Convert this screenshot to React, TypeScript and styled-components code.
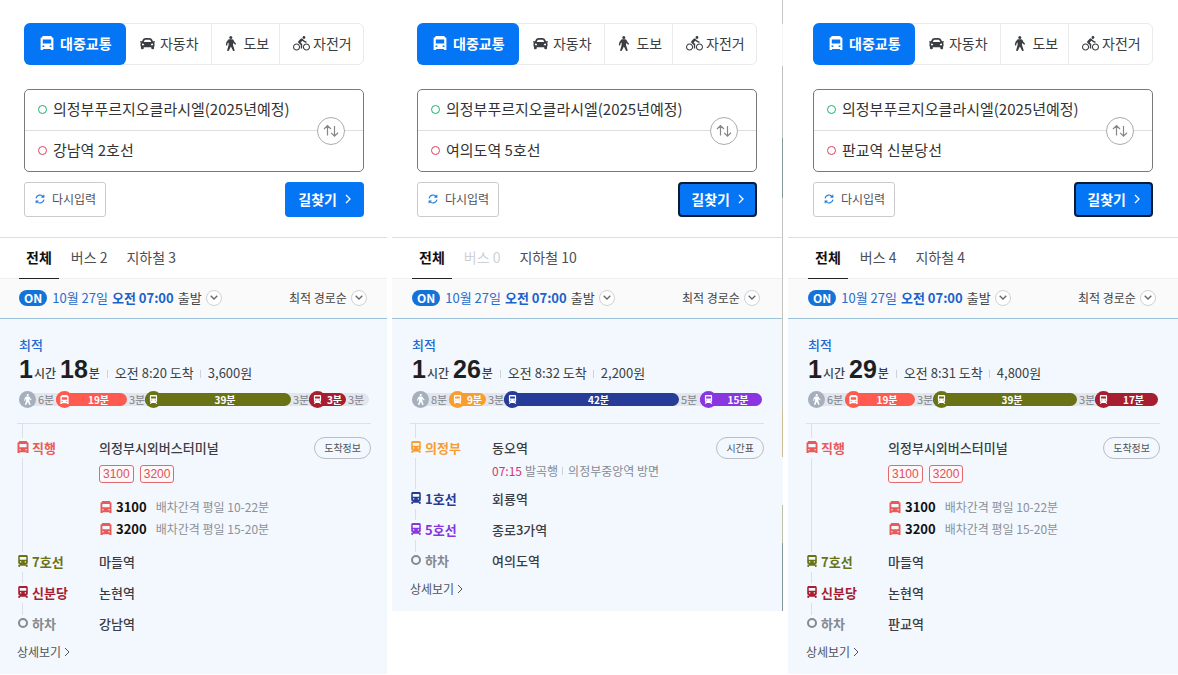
import React from "react";
import styled, { createGlobalStyle, css } from "styled-components";
import { FaCar } from "react-icons/fa";
import { MdDirectionsBike } from "react-icons/md";

const GlobalStyle = createGlobalStyle`
  *, *::before, *::after { box-sizing: border-box; }
  body {
    margin: 0;
    background: #fff;
    color: #333;
    font-family: "Noto Sans CJK KR", "Noto Sans", sans-serif;
    font-size: 14px;
    line-height: 20px;
  }
  button, input, select { font: inherit; color: inherit; }
  button { padding: 0; border: 0; background: none; cursor: pointer; white-space: nowrap; }
  ul, ol { margin: 0; padding: 0; list-style: none; }
  svg { display: block; flex: none; }
`;

/* ---------- data ---------- */

type Vehicle = "walk" | "bus" | "train" | "gap";

interface Segment {
  kind: Vehicle;
  color?: string;
  label: string;
  size: number;
}

interface Stop {
  kind: "bus" | "train" | "end";
  color: string;
  line: string;
  station: string;
  action?: string;
  buses?: { no: string; interval: string }[];
  next?: { time: string; bound: string; via: string };
}

interface Route {
  id: string;
  to: string;
  focused?: boolean;
  busCount: number;
  subwayCount: number;
  minutes: string;
  arrive: string;
  fare: string;
  segments: Segment[];
  stops: Stop[];
}

const RED = "#ff5a50";
const OLIVE = "#697215";
const CRIMSON = "#a71e31";
const NAVY = "#263c96";
const PURPLE = "#8936e0";
const ORANGE = "#f99d2e";
const BUS = "#e95b58";

const expressStop: Stop = {
  kind: "bus",
  color: BUS,
  line: "직행",
  station: "의정부시외버스터미널",
  action: "도착정보",
  buses: [
    { no: "3100", interval: "배차간격 평일 10-22분" },
    { no: "3200", interval: "배차간격 평일 15-20분" },
  ],
};

const routes: Route[] = [
  {
    id: "gangnam",
    to: "강남역 2호선",
    busCount: 2,
    subwayCount: 3,
    minutes: "18",
    arrive: "오전 8:20 도착",
    fare: "3,600원",
    segments: [
      { kind: "walk", label: "6분", size: 37 },
      { kind: "bus", color: RED, label: "19분", size: 71 },
      { kind: "gap", label: "3분", size: 18 },
      { kind: "train", color: OLIVE, label: "39분", size: 146 },
      { kind: "gap", label: "3분", size: 18 },
      { kind: "train", color: CRIMSON, label: "3분", size: 37 },
      { kind: "gap", label: "3분", size: 23 },
    ],
    stops: [
      expressStop,
      { kind: "train", color: OLIVE, line: "7호선", station: "마들역" },
      { kind: "train", color: CRIMSON, line: "신분당", station: "논현역" },
      { kind: "end", color: "#858a90", line: "하차", station: "강남역" },
    ],
  },
  {
    id: "yeouido",
    to: "여의도역 5호선",
    focused: true,
    busCount: 0,
    subwayCount: 10,
    minutes: "26",
    arrive: "오전 8:32 도착",
    fare: "2,200원",
    segments: [
      { kind: "walk", label: "8분", size: 37 },
      { kind: "train", color: ORANGE, label: "9분", size: 37 },
      { kind: "gap", label: "3분", size: 18 },
      { kind: "train", color: NAVY, label: "42분", size: 175 },
      { kind: "gap", label: "5분", size: 21 },
      { kind: "train", color: PURPLE, label: "15분", size: 62 },
    ],
    stops: [
      {
        kind: "train",
        color: ORANGE,
        line: "의정부",
        station: "동오역",
        action: "시간표",
        next: { time: "07:15", bound: "발곡행", via: "의정부중앙역 방면" },
      },
      { kind: "train", color: NAVY, line: "1호선", station: "회룡역" },
      { kind: "train", color: PURPLE, line: "5호선", station: "종로3가역" },
      { kind: "end", color: "#858a90", line: "하차", station: "여의도역" },
    ],
  },
  {
    id: "pangyo",
    to: "판교역 신분당선",
    focused: true,
    busCount: 4,
    subwayCount: 4,
    minutes: "29",
    arrive: "오전 8:31 도착",
    fare: "4,800원",
    segments: [
      { kind: "walk", label: "6분", size: 37 },
      { kind: "bus", color: RED, label: "19분", size: 70 },
      { kind: "gap", label: "3분", size: 18 },
      { kind: "train", color: OLIVE, label: "39분", size: 144 },
      { kind: "gap", label: "3분", size: 18 },
      { kind: "train", color: CRIMSON, label: "17분", size: 63 },
    ],
    stops: [
      expressStop,
      { kind: "train", color: OLIVE, line: "7호선", station: "마들역" },
      { kind: "train", color: CRIMSON, line: "신분당", station: "논현역" },
      { kind: "end", color: "#858a90", line: "하차", station: "판교역" },
    ],
  },
];

/* ---------- icons ---------- */

const BusIcon = ({ size = 12 }: { size?: number }) => (
  <svg width={size} height={size} viewBox="0 0 14 14" fill="currentColor" aria-hidden="true">
    <path
      fillRule="evenodd"
      d="M3.400 0h7.200c.8 0 1.300.6 1.400 1.500h.4c.6 0 1 .4 1 1V14H10.900v-1H3.100v1H.6V2.500c0-.6.4-1 1-1H2C2.100.6 2.600 0 3.400 0ZM2.800 3.400v4h8.400v-4H2.800ZM2.500 9.600v1.300h1.800V9.600H2.500Zm7.200 0v1.300h1.800V9.600H9.700Z"
    />
  </svg>
);

const TrainIcon = ({ size = 12 }: { size?: number }) => (
  <svg width={size} height={size} viewBox="0 0 14 14" fill="currentColor" aria-hidden="true">
    <path
      fillRule="evenodd"
      d="M3.400 0h7.200C11.800 0 12.600.8 12.600 2v6.800c0 1.100-.8 1.900-1.900 1.900l.5.8h1.400v1H11.800l.8 1.500h-1.700l-.8-1.500H3.900L3.100 14H1.400l.8-1.500h-.8v-1h1.400l.5-.8c-1.100 0-1.900-.8-1.900-1.900V2c0-1.200.8-2 2-2ZM3.200 2.200v3.400h7.600V2.200H3.200Zm.3 5.100v1.400H5V7.300H3.500Zm5.500 0v1.400h1.500V7.300H9Z"
    />
  </svg>
);

const WalkIcon = ({ size = 15 }: { size?: number }) => (
  <svg width={size} height={size} viewBox="0 0 15 15" fill="currentColor" aria-hidden="true">
    <circle cx="7.800" cy="1.500" r="1.500" />
    <path d="M5.900 3.300h3.300c.6 0 1 .3 1.300.8l1 2 1.400 1.300c.6.700-.4 1.600-1 1.100L10.300 7.200l-.3-.4v2.300l1.600 5c.3 1-1.300 1.500-1.700.5L7.900 10.400l-2 4.200c-.5.900-2 .4-1.700-.6l1.400-4.900V6.400l-1 .9-.3 1.700c-.2.900-1.500.7-1.400-.2l.4-2.300.2-.4 1.500-2.200c.2-.4.500-.6.900-.6Z" />
  </svg>
);

const SwapIcon = () => (
  <svg width="16" height="14" viewBox="0 0 16 14" fill="none" stroke="#85878a" strokeWidth="1.200" aria-hidden="true">
    <path d="M4.500 11.500V1.500M1 5l3.500-3.500L8 5M11.500 2v10M8.200 8.800l3.300 3.300L15 8.800" />
  </svg>
);

const RefreshIcon = () => (
  <svg width="10" height="10" viewBox="0 0 12 12" fill="none" stroke="#1a7be0" strokeWidth="1.300" aria-hidden="true">
    <path d="M1.200 5.200A4.900 4.900 0 0 1 10 3.300M10.600.8v2.900H7.700M10.800 6.800A4.900 4.900 0 0 1 2 8.700M1.400 11.200V8.300h2.900" />
  </svg>
);

const ArrowRight = ({ width = 1 }: { width?: number }) => (
  <svg width="6" height="10" viewBox="0 0 6 10" fill="none" stroke="currentColor" strokeWidth={width} aria-hidden="true">
    <path d="M1 1l4 4-4 4" />
  </svg>
);

const ArrowDown = () => (
  <svg width="8" height="5" viewBox="0 0 8 5" fill="none" stroke="#666" strokeWidth="1.300" aria-hidden="true">
    <path d="M.7.700L4 4 7.300.700" />
  </svg>
);

/* ---------- page ---------- */

const Page = styled.main`
  display: grid;
  grid-template-columns: 387fr 391fr 390fr;
  gap: 5px;
  align-items: start;
`;

/* The first panel is trimmed a little closer than the two beside it. */
const Panel = styled.section<{ $trimmed: boolean; $edge: boolean }>`
  --left: ${(p) => (p.$trimmed ? 0 : 1)}px;
  --right: ${(p) => (p.$trimmed ? 0 : 2)}px;
  min-width: 0;
  display: grid;
  grid-template-columns: minmax(0, 1fr) ${(p) => (p.$edge ? "1px" : "")};
`;

const MapEdge = styled.div`
  background: linear-gradient(
    #c6c6c6 0 24px, #f4f4f4 24px 66px, #bfc1c1 66px 138px, #87999a 138px 198px,
    #c3c3bf 198px 410px, #c9bd98 410px 457px, #f3f8fc 457px 505px,
    #bcc0ac 505px 543px, #83999d 543px
  );
`;

const SearchForm = styled.form`
  padding: 23px calc(23px + var(--right)) 20px calc(24px + var(--left));
`;

const Modes = styled.div`
  display: flex;
  height: 42px;
  border: 1px solid #e8eaed;
  border-radius: 6px;
`;

const Mode = styled.button<{ $active?: boolean; $grow: number; $gap: number }>`
  flex: ${(p) => p.$grow} 1 0;
  display: flex;
  align-items: center;
  justify-content: center;
  gap: ${(p) => p.$gap}px;
  padding: 0 0 2px 2px;
  color: #3a3d42;

  & + & + & { border-left: 1px solid #e8eaed; }

  ${(p) =>
    p.$active &&
    css`
      margin: -1px 0 -1px -1px;
      border-radius: 6px;
      background: #0475f4;
      color: #fff;
      font-weight: 700;
    `}
`;

const Places = styled.div`
  position: relative;
  margin-top: 24px;
  border: 1px solid #77797d;
  border-radius: 5px;
`;

const Place = styled.label`
  display: flex;
  align-items: center;
  gap: 6px;
  height: 40px;
  padding: 0 56px 2px 13px;

  & + & {
    height: 41px;
    border-top: 1px solid #dcdee0;
  }
`;

const Dot = styled.span<{ $color: string }>`
  flex: none;
  width: 9px;
  height: 9px;
  border: 1px solid ${(p) => p.$color};
  border-radius: 50%;
`;

const PlaceInput = styled.input`
  flex: 1;
  min-width: 0;
  padding: 0;
  border: 0;
  outline: 0;
  background: none;
  font-size: 15px;
  line-height: 24px;
  color: #333;
`;

const SwapButton = styled.button`
  position: absolute;
  top: 50%;
  right: 18px;
  display: grid;
  place-items: center;
  width: 28px;
  height: 28px;
  margin-top: -14px;
  border: 1px solid #a9abae;
  border-radius: 50%;
  background: #fff;
`;

const Actions = styled.div`
  display: flex;
  justify-content: space-between;
  margin-top: 10px;
`;

const ResetButton = styled.button`
  display: flex;
  align-items: center;
  gap: 7px;
  height: 35px;
  padding: 0 9px 2px 10px;
  border: 1px solid #c9cbce;
  border-radius: 3px;
  font-size: 12px;
  color: #505357;
`;

const FindButton = styled.button<{ $focused?: boolean }>`
  display: flex;
  align-items: center;
  gap: 8px;
  height: 35px;
  padding: 0 11px 1px;
  border: 2px solid ${(p) => (p.$focused ? "#0a1a33" : "#0475f4")};
  border-radius: 4px;
  background: #0475f4;
  color: #fff;
  font-weight: 700;
`;

const Tabs = styled.div`
  display: flex;
  gap: 5px;
  padding: 0 calc(19px + var(--left));
  border-top: 1px solid #dcdddf;
  border-bottom: 1px solid #eeeeee;
`;

const Tab = styled.button<{ $active?: boolean }>`
  height: 41px;
  margin-bottom: -1px;
  padding: 0 7px 2px;
  border-bottom: 1px solid transparent;
  color: #4c4f54;

  &:disabled { color: #cfd1d4; cursor: default; }

  ${(p) =>
    p.$active &&
    css`
      border-color: #222;
      color: #111;
      font-weight: 700;
    `}
`;

const FilterBar = styled.div`
  display: flex;
  align-items: center;
  height: 40px;
  padding: 0 calc(20px + var(--right)) 2px calc(19px + var(--left));
  border-bottom: 1px solid #9cc1da;
  background: #fafafa;
`;

const OnSwitch = styled.button`
  height: 16px;
  padding: 0 5px;
  border-radius: 8px;
  background: #1473d8;
  color: #fff;
  font-size: 12px;
  font-weight: 700;
  line-height: 16px;
`;

const Departure = styled.button`
  display: flex;
  align-items: center;
  gap: 4px;
  margin-left: 5px;
  font-size: 13px;
  color: #444;

  time { display: flex; gap: 4px; color: #2a6ccb; }
  b { color: #1b62cc; }
`;

const Round = styled.span`
  display: grid;
  place-items: center;
  width: 16px;
  height: 16px;
  border: 1px solid #cfd1d4;
  border-radius: 50%;
  background: #fff;
`;

const SortField = styled.label`
  display: flex;
  align-items: center;
  gap: 4px;
  margin-left: auto;

  select {
    appearance: none;
    padding: 0;
    border: 0;
    background: none;
    font-size: 12px;
    line-height: 20px;
    color: #444;
  }
`;

const Card = styled.article`
  padding: 16px calc(16px + var(--right)) 12px calc(17px + var(--left));
  background: #f3f8fe;
`;

const Best = styled.div`
  padding-left: 2px;
  color: #1f69cf;
  font-size: 13px;
  font-weight: 500;
`;

const Bar = styled.i`
  flex: none;
  display: inline-block;
  width: 1px;
  height: 8px;
  margin: 0 7px 0 6px;
  background: #cdd2d9;
`;

const Summary = styled.div`
  display: flex;
  align-items: baseline;
  height: 28px;
  padding-left: 2px;
  font-size: 13px;
  line-height: 28px;
  color: #3c3f44;
  white-space: nowrap;

  strong {
    font-family: "Liberation Sans", Arial, sans-serif;
    font-size: 25px;
    line-height: 28px;
    color: #1d1f22;
  }
`;

const Unit = styled.span`
  margin: 0 1px;
  font-size: 12px;
  font-weight: 500;

  & + strong { margin-left: 3px; }
`;

const Track = styled.ol`
  display: flex;
  height: 13px;
  margin: 10px 2px 0;
  border-radius: 7px;
  background: #e3e7ed;
`;

const Leg = styled.li<{ $size: number; $color?: string }>`
  flex: ${(p) => p.$size} 1 0;
  min-width: 0;
  display: flex;
  align-items: center;
  border-radius: 7px;
  background: ${(p) => p.$color ?? "transparent"};
  color: ${(p) => (p.$color ? "#fff" : "#7d838c")};
  font-size: ${(p) => (p.$color ? 10 : 11)}px;
  font-weight: ${(p) => (p.$color ? 700 : 400)};
  line-height: 13px;
  white-space: nowrap;

  > span:last-child {
    flex: 1;
    padding: ${(p) => (p.$color ? "0 3px 0 0" : "0 0 0 2px")};
    text-align: ${(p) => (p.$color ? "center" : "left")};
  }
`;

const LegIcon = styled.span<{ $color: string }>`
  flex: none;
  display: grid;
  place-items: center;
  width: 17px;
  height: 17px;
  border-radius: 50%;
  background: ${(p) => p.$color};
  color: #fff;
`;

const Stops = styled.ol`
  position: relative;
  display: flex;
  flex-direction: column;
  gap: 11px;
  margin-top: 17px;
  padding-top: 14px;
  border-top: 1px solid #d9e1ec;

  &::before {
    content: "";
    position: absolute;
    top: 0;
    bottom: 16px;
    left: 5px;
    width: 1px;
    background: #d9e0e9;
  }
`;

const StopRow = styled.li`
  display: grid;
  grid-template-columns: 82px minmax(0, 1fr) auto;
  align-items: start;
`;

const LineName = styled.div<{ $color: string }>`
  display: flex;
  align-items: center;
  color: ${(p) => p.$color};
  font-size: 13px;
  font-weight: 700;
`;

const LineIcon = styled.span`
  position: relative;
  display: grid;
  justify-content: center;
  width: 12px;
  margin-right: 3px;
  padding: 3px 0 5px;
  background: #f3f8fe;
`;

const EndMark = styled.i`
  width: 10px;
  height: 10px;
  border: 2px solid #858a90;
  border-radius: 50%;
`;

const Station = styled.div`
  font-size: 13px;
  font-weight: 500;
  color: #3a3d42;
`;

const PillButton = styled.button`
  height: 22px;
  margin: -1px 0;
  padding: 0 9px;
  border: 1px solid #b9bdc3;
  border-radius: 11px;
  font-size: 10px;
  color: #505357;
`;

const BusTags = styled.div`
  display: flex;
  gap: 6px;
  margin-top: 7px;
`;

const BusTag = styled.span`
  height: 18px;
  padding: 0 3px;
  border: 1px solid #e06a70;
  border-radius: 3px;
  background: #fff7f8;
  color: #d9535a;
  font: 12px/16px "Liberation Sans", Arial, sans-serif;
`;

const BusTimes = styled.ul`
  margin: 13px 0 1px;
  padding-left: 1px;

  li {
    display: flex;
    align-items: center;
    height: 22px;
    font-size: 12px;
    color: #8b9097;
    white-space: nowrap;
  }
  svg { color: ${BUS}; }
  b { margin: 0 9px 0 4px; font-size: 13px; color: #111; }
`;

const NextTrain = styled.p`
  display: flex;
  align-items: center;
  margin: 6px 0 0;
  font-size: 12px;
  line-height: 14px;
  color: #858a92;
  white-space: nowrap;

  time { margin-right: 3px; color: #d6336c; }
  ${Bar} { margin: 0 5px 0 4px; }
`;

const Detail = styled.a`
  display: flex;
  align-items: center;
  gap: 3px;
  width: max-content;
  margin-top: 8px;
  color: #505357;
  font-size: 12px;
  text-decoration: none;
`;

/* ---------- parts ---------- */

const Legs = ({ segments }: { segments: Segment[] }) => (
  <Track>
    {segments.map((s, i) => (
      <Leg key={i} $size={s.size} $color={s.color}>
        {s.kind === "walk" && (
          <LegIcon $color="#a5afbd">
            <WalkIcon size={11} />
          </LegIcon>
        )}
        {s.kind === "bus" && (
          <LegIcon $color={s.color!}>
            <BusIcon size={9} />
          </LegIcon>
        )}
        {s.kind === "train" && (
          <LegIcon $color={s.color!}>
            <TrainIcon size={9} />
          </LegIcon>
        )}
        <span>{s.label}</span>
      </Leg>
    ))}
  </Track>
);

const StopItem = ({ stop }: { stop: Stop }) => (
  <StopRow>
    <LineName $color={stop.color}>
      <LineIcon>
        {stop.kind === "bus" && <BusIcon />}
        {stop.kind === "train" && <TrainIcon />}
        {stop.kind === "end" && <EndMark />}
      </LineIcon>
      {stop.line}
    </LineName>
    <div>
      <Station>{stop.station}</Station>
      {stop.buses && (
        <>
          <BusTags>
            {stop.buses.map((b) => (
              <BusTag key={b.no}>{b.no}</BusTag>
            ))}
          </BusTags>
          <BusTimes>
            {stop.buses.map((b) => (
              <li key={b.no}>
                <BusIcon />
                <b>{b.no}</b>
                {b.interval}
              </li>
            ))}
          </BusTimes>
        </>
      )}
      {stop.next && (
        <NextTrain>
          <time>{stop.next.time}</time>
          {stop.next.bound}
          <Bar />
          {stop.next.via}
        </NextTrain>
      )}
    </div>
    {stop.action && <PillButton type="button">{stop.action}</PillButton>}
  </StopRow>
);

const RoutePanel = ({ route, index }: { route: Route; index: number }) => (
  <Panel $trimmed={index === 0} $edge={index === 1}>
    <div>
      <SearchForm onSubmit={(e) => e.preventDefault()}>
        <Modes>
          <Mode type="button" $active $grow={103} $gap={6}>
            <BusIcon size={14} />
            대중교통
          </Mode>
          <Mode type="button" $grow={86} $gap={5}>
            <FaCar size={15} />
            자동차
          </Mode>
          <Mode type="button" $grow={67} $gap={5}>
            <WalkIcon />
            도보
          </Mode>
          <Mode type="button" $grow={84} $gap={3}>
            <MdDirectionsBike size={17} />
            자전거
          </Mode>
        </Modes>
        <Places>
          <Place>
            <Dot $color="#1fae6b" />
            <PlaceInput aria-label="출발지" defaultValue="의정부푸르지오클라시엘(2025년예정)" />
          </Place>
          <Place>
            <Dot $color="#e0405e" />
            <PlaceInput aria-label="도착지" defaultValue={route.to} />
          </Place>
          <SwapButton type="button" aria-label="출발지와 도착지 바꾸기">
            <SwapIcon />
          </SwapButton>
        </Places>
        <Actions>
          <ResetButton type="reset">
            <RefreshIcon />
            다시입력
          </ResetButton>
          <FindButton type="submit" $focused={route.focused}>
            길찾기
            <ArrowRight width={1.300} />
          </FindButton>
        </Actions>
      </SearchForm>
      <Tabs>
        <Tab type="button" $active>
          전체
        </Tab>
        <Tab type="button" disabled={route.busCount === 0}>
          버스 {route.busCount}
        </Tab>
        <Tab type="button">지하철 {route.subwayCount}</Tab>
      </Tabs>
      <FilterBar>
        <OnSwitch type="button" aria-pressed="true">
          ON
        </OnSwitch>
        <Departure type="button">
          <time>
            10월 27일 <b>오전 07:00</b>
          </time>
          출발
          <Round>
            <ArrowDown />
          </Round>
        </Departure>
        <SortField>
          <select aria-label="정렬" defaultValue="best">
            <option value="best">최적 경로순</option>
          </select>
          <Round>
            <ArrowDown />
          </Round>
        </SortField>
      </FilterBar>
      <Card>
        <Best>최적</Best>
        <Summary>
          <strong>1</strong>
          <Unit>시간</Unit>
          <strong>{route.minutes}</strong>
          <Unit>분</Unit>
          <Bar />
          {route.arrive}
          <Bar />
          {route.fare}
        </Summary>
        <Legs segments={route.segments} />
        <Stops>
          {route.stops.map((stop) => (
            <StopItem key={stop.line} stop={stop} />
          ))}
        </Stops>
        <Detail href={`#${route.id}`}>
          상세보기
          <ArrowRight />
        </Detail>
      </Card>
    </div>
    {index === 1 && <MapEdge />}
  </Panel>
);

export default function App() {
  return (
    <>
      <GlobalStyle />
      <Page>
        {routes.map((route, i) => (
          <RoutePanel key={route.id} route={route} index={i} />
        ))}
      </Page>
    </>
  );
}
